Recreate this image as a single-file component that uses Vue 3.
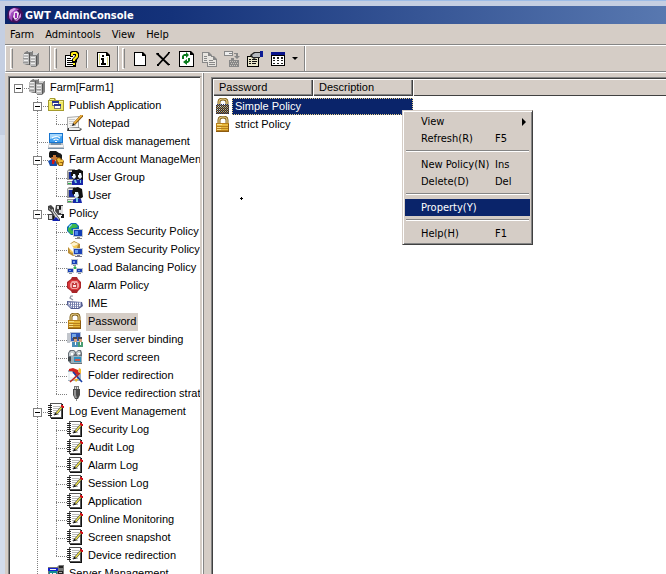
<script setup>
import { h } from 'vue'

// Each icon is a list of [fill, path, stroke, strokeWidth] layers on a 16x16 grid.
const note = [
  ['#555', 'M2 0h12v15H2z'],
  ['#fff', 'M3 1h10v13H3z'],
  ['#111', 'M14 1h1v15H3v-1h11z'],
  ['none', 'M0 2.500h4M0 4.500h4M0 6.500h4M0 8.500h4M0 10.500h4M0 12.500h4', '#222', 1],
  ['none', 'M5 3.500h7M5 5.500h6M5 7.500h4M5 9.500h3M5 11.500h6', '#bbb', 1],
  ['none', 'M14 4L8 11', '#333', 2.6],
  ['none', 'M13.500 4.500L8.500 10.500', '#f4e84e', 1.3],
  ['#111', 'M7 9.500l2 2-3 1z'],
  ['#d01018', 'M13 2h2v1h1v2h-2V4h-1z']
]
const padlock = [
  ['none', 'M4 7V4q0-3 4-3t4 3v4', '#80601c', 3],
  ['none', 'M4 7V4q0-3 4-3t4 3v4', '#e6cd85', 1.2],
  ['#b87f1a', 'M1 7h13v9H1z'],
  ['#e8b93c', 'M2 8h11v2H2zM2 11h11v1H2zM2 13h11v1H2z'],
  ['#f8e08a', 'M2 8h5v1H2zM2 11h4v1H2zM2 13h4v1H2z'],
  ['#8d5c10', 'M1 15h13v1H1zM13 8h1v8h-1z']
]
const icons = {
  app: [
    ['#43105a', 'M8 0l5 1 3 5-1 6-5 4-6-1-4-4 1-7 4-3z'],
    ['#a34ac0', 'M4 2l4-1 4 1-6 5-1 7-3-3V5z'],
    ['#d9a5e6', 'M3 3l4-2 2 1-5 4-1 4-1-3z'],
    ['#f2dff6', 'M7 5l3-1 2 2-1 5-3 2-2-3z'],
    ['#9a2bb8', 'M8 6h2v5H8z'],
    ['#c887dc', 'M12 9l2-3v4l-4 4-3-1 4-1z']
  ],
  farm: [
    ['#808080', 'M1 2l3-2h6v14H4l-3-1zM8 4l2-2h6v11l-3 3H8z'],
    ['#bcbcbc', 'M0 3h6v10H0zM7 5h6v10H7z'],
    ['#eee', 'M1 3h4v1H1zM1 6h4v1H1zM1 9h4v1H1zM8 6h4v1H8zM8 9h4v1H8zM8 12h4v1H8z'],
    ['#555', 'M6 2h1v12H6zM13 5h1v10h-1z'],
    ['#d0d0d0', 'M5 0h4v1H5zM10 2h5v1h-5zM10 3h4v1h-4z'],
    ['#999', 'M0 7h5v1H0zM0 11h5v1H0zM7 10h5v1H7z']
  ],
  publish: [
    ['#a59b2d', 'M0 3h1l1-2h5l1 2h8v11H0z'],
    ['#f1ea66', 'M1 4h14v9H1z'],
    ['#fbf7a0', 'M2 2h4v1H2zM1 4h14v1H1z'],
    ['#777', 'M4 4h7v5H4zM6 7h7v5H6z'],
    ['#fff', 'M5 6h5v2H5zM7 9h5v2H7z'],
    ['#28348f', 'M4 4h7v2H4zM6 7h7v2H6z']
  ],
  notepad: [
    ['#aaa', 'M0 2l12-1v13l-12 1z'],
    ['#f6f6f4', 'M1 3l10-1v11l-10 1z'],
    ['none', 'M2 4.500h6M2 6.500h5M2 8.500h4M3 10.500h6', '#ccc', 1],
    ['#333', 'M1 13l10-1 4 2-2 2H0z'],
    ['#eee', 'M2 13l9-.5 3 1.500-2 1H2z'],
    ['none', 'M15.500 0L7 9', '#8e5d10', 2.800],
    ['none', 'M15 0L7 8.500', '#f3b33e', 1.400],
    ['#111', 'M6 8l2 2-3 1z']
  ],
  disk: [
    ['#1674cf', 'M1 0h14v10H1z'],
    ['#3fa0f2', 'M2 1h12v8H2z'],
    ['#a3d6fc', 'M2 1h12v2L2 6z'],
    ['none', 'M4 5q4-3 8 0M5.500 7q2.500-2 5 0M7 8.500h2', '#fff', 1.200],
    ['#b8bec5', 'M1 10h14l1 5H0z'],
    ['#f7f7f7', 'M1 12h14v2H1z'],
    ['#7a93a8', 'M3 10h10v2H3zM0 15h16v1H0z']
  ],
  account: [
    ['#151515', 'M2 0h6l3 2v6H4L1 6V2z'],
    ['#c77736', 'M4 4h4v2h2v2L7 10 3 8z'],
    ['#111', 'M3 2h6v2H5v2H3z'],
    ['#174caa', 'M0 10l4-2 5 3v4H2z'],
    ['#d01918', 'M4 9h3l-1 4H4z'],
    ['#1b1b1b', 'M8 3l4-1 2 2v4h-3l-2-2z'],
    ['#96600e', 'M8 8l3-2 3 2 2 2-1 5h-4l-3-3z'],
    ['#f2c03c', 'M9 8l2-1 2 2-1 3-2-1zM12 9h3v2h-3zM11 12h3v2h-3z']
  ],
  group: [
    ['#999', 'M0 2l2-2h6v11H0zM0 12h7v4H0z'],
    ['#e4e4e4', 'M1 2h6v1H1zM1 13h5v1H1z'],
    ['#142a96', 'M2 3h6v7H2z'],
    ['#101010', 'M5 1h5l2-1 4 2v9l-2 1-3-2-3 2-3-3z'],
    ['#eef7ff', 'M5 5h3l1 3-2 2-2-2zM11 4h3l1 4-2 2-2-2z'],
    ['#111', 'M4 3h5v2H6v2H4zM10 2h5v2h-3v2h-2z'],
    ['#1828aa', 'M5 12l3-2 3 1 3-1 2 1v5H5z'],
    ['#7cc9dd', 'M7 11h2l1 3H8zM13 11h1v3h-1z'],
    ['#24b747', 'M1 14h3v1H1z']
  ],
  user: [
    ['#999', 'M0 2l2-2h6v11H0zM0 12h8v4H0z'],
    ['#e4e4e4', 'M1 2h6v1H1zM1 13h6v1H1z'],
    ['#18299d', 'M2 3h6v7H2z'],
    ['#111', 'M6 1l5-1 4 2 1 8-3 2-5-2-3-4z'],
    ['#e4f2f8', 'M7 5h4l1 4-2 2-3-2z'],
    ['#111', 'M6 2h6v3H8v2H6z'],
    ['#1628aa', 'M6 13l3-2 5 1 1 4H6z'],
    ['#7cc9dd', 'M9 11h2v4H9z'],
    ['#29bd43', 'M1 14h3v1H1z']
  ],
  policy: [
    ['#444', 'M0 1l3-1 3 3v3l6 8v2H8L3 7 0 5z'],
    ['#d8d8d8', 'M1 3l2 2 2-1v2l6 8v1H9L4 6 1 4z'],
    ['#444', 'M8 0h7v10h-5l-3-4zM0 9h5l2 3-1 3H0z'],
    ['#ddd', 'M9 1h2v3H9zM13 1h2v8h-2zM11 5h2v3h-2zM1 10h3v4H1z'],
    ['#181818', 'M11 1h2v3h-2zM14 9h2v4h-3v-2h1zM5 11h1v4H5z'],
    ['#1020b0', 'M4 16l4-4 4 4z']
  ],
  access: [
    ['#0969b7', 'M4 0h5l3 3v5l-4 4H4L0 8V4z'],
    ['#3bb94c', 'M5 1h4l2 3-3 1-3 0-1 2 3 1v3H4L1 8V5z'],
    ['#9bdfff', 'M2 3l3-2v1L2 5z'],
    ['#bfc8ce', 'M6 6h10v8H6z'],
    ['#123eb5', 'M7 7h8v6H7z'],
    ['#4e86ec', 'M8 8h3v4H8z'],
    ['#888', 'M10 14h3v1h2v1H8v-1h2z']
  ],
  system: [
    ['#b98c35', 'M1 4l6-4 6 3v10l-7 2-5-3z'],
    ['#f4ca59', 'M2 5l5-3 4 2-3 9-5-2z'],
    ['#fff4ce', 'M2 4l5-3 5 2-5 2z'],
    ['#fff', 'M1 3l2-1 6 8-2 2-6-6z'],
    ['#c3cad3', 'M6 7h10v7H6z'],
    ['#1c42b7', 'M7 8h8v5H7z'],
    ['#6ea1ef', 'M8 9h3v3H8z'],
    ['#778', 'M10 14h3v1h2v1H8v-1h2z']
  ],
  balance: [
    ['none', 'M8 7v3M8 8l-4 4M8 8l4 4', '#36b454', 1.200],
    ['#bdc5cf', 'M4 0h7v6H4zM0 9h7v5H0zM9 9h7v5H9z'],
    ['#193eb4', 'M5 1h5v4H5zM1 10h5v3H1zM10 10h5v3h-5z'],
    ['#739bea', 'M6 2h2v2H6zM2 11h2v1H2zM11 11h2v1h-2z'],
    ['#8b929c', 'M6 6h3v1H6zM2 14h3v1H2zM11 14h3v1h-3z']
  ],
  alarm: [
    ['#a92529', 'M4 2l1-2h5l1 2 3 3v6l-3 3-1 2H5l-1-2-4-3V5z'],
    ['#d9373b', 'M4 3h7l2 3v4l-2 3H4l-3-3V6z'],
    ['#f0a09e', 'M5 4h5l2 3v3l-2 2H5l-2-2V7z'],
    ['#c2383c', 'M5 6h5v5H5z'],
    ['#fbe4e2', 'M7 6h1v1H7zM6 8h3v2H6z']
  ],
  ime: [
    ['none', 'M6 5L3 3l1-2h2', '#8a8d9c', 1.200],
    ['#555e91', 'M0 6l15 1 1 4-4 3H4L0 10z'],
    ['#a8afd2', 'M1 7h13v4l-3 2H4l-3-3z'],
    ['none', 'M2 8.500h11M3 10.500h10M5 12.500h6', '#fff', 1],
    ['none', 'M3.500 7v4M5.500 7v6M7.500 7v6M9.500 7v6M11.500 7v5', '#747da7', 1]
  ],
  lock: padlock,
  binding: [
    ['#c2c6cc', 'M0 2h3v10H0z'],
    ['#b9c4d6', 'M3 1h11v10H3z'],
    ['#2f58b8', 'M4 2h9v8H4z'],
    ['#75a9e9', 'M5 3h4v4H5z'],
    ['#51474a', 'M6 6h4v3H6zM11 6h4v3h-4z'],
    ['#d6a27d', 'M7 8h3v3H7zM12 8h3v3h-3z'],
    ['#4c8fb8', 'M5 11h6v5H5z'],
    ['#4a9d72', 'M11 11h5v5h-5z'],
    ['#fff', 'M8 11h1v3H8zM13 11h1v3h-1z']
  ],
  record: [
    ['#687078', 'M1 4l2-3h4l2 2 2-2h3l1 3v11H4l-3-3z'],
    ['#c7ced0', 'M2 4l2-2h3l1 2-2 3H2zM9 4l2-2h2l1 3-3 2z'],
    ['#9db0bb', 'M4 7h11v7H4z'],
    ['#2e91c1', 'M7 8h7v5H7z'],
    ['#cf5b50', 'M8 10h5v2H8z'],
    ['#fff', 'M4 4h2v2H4zM11 4h2v1h-2z'],
    ['#42494c', 'M1 8h3v4H1z']
  ],
  folder: [
    ['#9fb2bf', 'M1 3h8l5 4v7H1z'],
    ['#edf2f4', 'M1 5h9v8H1z'],
    ['#cf2520', 'M2 2l4-1 5 2 1 4-3 1-4-4H2z'],
    ['#f2bf30', 'M12 1l2 1v5l-3-3z'],
    ['none', 'M6 5l9 10', '#173ea6', 1.600],
    ['none', 'M13 6L3 15', '#be2620', 1.600],
    ['#e6b62c', 'M7 12h5l-3 3z'],
    ['#fff', 'M3 7h4v3H3z']
  ],
  device: [
    ['#777', 'M7 1h5v5H7z'],
    ['#ddd', 'M8 2h1v3H8zM10 2h1v3h-1z'],
    ['#4a4a4a', 'M6 4h7v6l-2 4H8l-2-4z'],
    ['#959595', 'M7 5h2v5l1 3H8l-1-3z'],
    ['#888', 'M9 14h1v2H9z']
  ],
  note,
  server: [
    ['#777', 'M0 2h9l2-2h5v13l-2 3H0z'],
    ['#168c91', 'M1 5h8v10H1z'],
    ['#1420cf', 'M0 3h10v3H0z'],
    ['#f3f3f3', 'M2 4h6v1H2zM2 8h2v2H2zM5 8h3v1H5z'],
    ['#222', 'M11 1h4v2h-4zM10 6h5v8h-5z'],
    ['#aaa', 'M11 7h3v1h-3zM11 10h3v1h-3z']
  ],
  help: [
    ['#000', 'M1 4h8v1h3v11H1z'],
    ['#fff', 'M2 5h9v10H2z'],
    ['none', 'M3 7.500h4M3 9.500h5M3 11.500h5M3 13.500h6', '#000', 1],
    ['#000', 'M6 1l2-1h5l2 2v4l-2 3v2l-1 1v3H9v-3h-1V8l3-3V4H9v2H6z'],
    ['#ffee16', 'M7 2l2-1h3l2 2v3l-3 3v1H9V8l3-3V3H9v2H7zM9 12h2v2H9z']
  ],
  info: [
    ['#000', 'M2 1h10l3 3v12H2z'],
    ['#fff', 'M3 2h8v3h3v10H3z'],
    ['#dcdc84', 'M4 3h1v11H4zM12 6h1v8h-1z'],
    ['#000', 'M11 2h1v2h2v1h-3zM7 4h2v2H7zM6 7h3v5h2v2H6v-2h1V9H6z']
  ],
  page: [
    ['#000', 'M2 1h9l3 3v11H2z'],
    ['#fff', 'M3 2h7v3h3v9H3z'],
    ['#000', 'M10 2h1v2h2v1h-3z']
  ],
  cross: [
    ['none', 'M2 2.500l12 11.500M14 2L3 14', '#000', 1.800],
    ['#000', 'M1 2h3v2H2zM13 1h2v1h-2zM2 13h2v2H2zM13 13h2v1h-2z']
  ],
  refresh: [
    ['#000', 'M1 0h12l3 3v13H1z'],
    ['#fff', 'M2 1h10v3h3v11H2z'],
    ['#000', 'M12 1h1v2h2v1h-3z'],
    ['#087b1b', 'M4 5l2-2h2V1l3 3-3 3V5H6v3H4zM12 7v3l-2 2H9v2l-4-3 4-3v2h1V7z']
  ],
  copy: [
    ['#888', 'M1 1h7l3 3v8H1zM6 5h7l3 3v8H6z'],
    ['#e8e5e0', 'M2 2h5v3h3v6H2zM7 6h5v3h3v6H7z'],
    ['none', 'M3 5.500h3M3 7.500h3M3 9.500h3M8 9.500h4M8 11.500h6M8 13.500h6', '#888', 1]
  ],
  paste: [
    ['#888', 'M0 0h9v5H0z'],
    ['#eee', 'M1 1h7v3H1z'],
    ['#888', 'M5 2h3v1H5zM10 2h4v3h2l-3 3-3-3h2V3h-2z'],
    ['#888', 'M5 9h2V7h3v2h5v7H5z'],
    ['#c9c4bd', 'M6 10h1v1H6zM8 10h1v1H8zM10 10h1v1h-1zM12 10h1v1h-1zM7 12h1v1H7zM9 12h1v1H9zM11 12h1v1h-1zM13 12h1v1h-1zM6 14h1v1H6zM8 14h1v1H8zM10 14h1v1h-1zM12 14h1v1h-1z']
  ],
  props: [
    ['#000', 'M0 5h12v11H0z'],
    ['#e8e5c9', 'M1 6h10v9H1z'],
    ['none', 'M2 8.500h2M5 8.500h5M2 10.500h2M5 10.500h5M2 12.500h2M5 12.500h4', '#111', 1],
    ['#222', 'M3 4l4-3h6v6H9L7 8 4 6z'],
    ['#b6bac0', 'M5 4l3-2h5v4H8L6 6z'],
    ['#0c1b94', 'M13 0h3v6h-3z']
  ],
  list: [
    ['#000', 'M1 1h14v14H1z'],
    ['#fff', 'M2 5h12v9H2z'],
    ['#08128b', 'M1 1h14v3H1z'],
    ['#222', 'M3 6h2v2H3zM7 6h2v2H7zM11 6h2v2h-2zM3 9h2v1H3zM7 9h2v1H7zM11 9h2v1h-2zM3 12h2v1H3zM7 12h2v1H7zM11 12h2v1h-2z']
  ]
}

const Icon = (props) =>
  h('svg', { viewBox: '0 0 16 16', width: 16, height: 16, 'aria-hidden': 'true' },
    icons[props.name].map(([fill, d, stroke, width]) =>
      h('path', { fill, d, stroke, 'stroke-width': width })))
Icon.props = ['name']

const menus = ['Farm', 'Admintools', 'View', 'Help']

const n = (label, icon, children) => ({ label, icon, children })
const farm = n('Farm[Farm1]', 'farm', [
  n('Publish Application', 'publish', [n('Notepad', 'notepad')]),
  n('Virtual disk management', 'disk'),
  n('Farm Account ManageMent', 'account', [n('User Group', 'group'), n('User', 'user')]),
  n('Policy', 'policy', [
    n('Access Security Policy', 'access'),
    n('System Security Policy', 'system'),
    n('Load Balancing Policy', 'balance'),
    n('Alarm Policy', 'alarm'),
    n('IME', 'ime'),
    n('Password', 'lock'),
    n('User server binding', 'binding'),
    n('Record screen', 'record'),
    n('Folder redirection', 'folder'),
    n('Device redirection strategy', 'device')
  ]),
  n('Log Event Management', 'note', [
    n('Security Log', 'note'),
    n('Audit Log', 'note'),
    n('Alarm Log', 'note'),
    n('Session Log', 'note'),
    n('Application', 'note'),
    n('Online Monitoring', 'note'),
    n('Screen snapshot', 'note'),
    n('Device redirection', 'note')
  ]),
  n('Server Management', 'server')
])

// Flatten the tree; each row carries the guide cells drawn before its icon.
const rows = []
const walk = (node, guides, last) => {
  const own = !guides ? 'root' : last ? 'end' : 'mid'
  rows.push({ ...node, cells: [...(guides || []), own], open: !!node.children })
  const next = guides ? [...guides, last ? 'none' : 'line'] : ['none']
  node.children?.forEach((c, i) => walk(c, next, i === node.children.length - 1 && c.icon !== 'server'))
}
walk(farm, null, true)

const context = [
  [{ label: 'View', sub: true }, { label: 'Refresh(R)', key: 'F5' }],
  [{ label: 'New Policy(N)', key: 'Ins' }, { label: 'Delete(D)', key: 'Del' }],
  [{ label: 'Property(Y)', active: true }],
  [{ label: 'Help(H)', key: 'F1' }]
]
</script>

<template>
  <div class="desktop">
    <div class="window">
      <header class="title"><Icon name="app" /><span>GWT AdminConsole</span></header>
      <nav class="menubar">
        <button v-for="m in menus" :key="m" type="button">{{ m }}</button>
      </nav>
      <div class="toolbar">
        <div class="band">
          <i class="grip"></i>
          <button type="button" class="tool wide" aria-label="Farm"><Icon name="farm" /></button>
        </div>
        <div class="band">
          <i class="grip"></i>
          <button type="button" class="tool" aria-label="Help"><Icon name="help" /></button>
          <i class="sep"></i>
          <button type="button" class="tool" aria-label="About"><Icon name="info" /></button>
        </div>
        <div class="band">
          <i class="grip"></i>
          <button v-for="t in ['page', 'cross', 'refresh', 'copy', 'paste', 'props', 'list']" :key="t"
            type="button" class="tool" :aria-label="t"><Icon :name="t" /></button>
          <button type="button" class="drop" aria-label="View options"><i class="down"></i></button>
        </div>
      </div>
      <main class="panes">
        <ul class="tree">
          <li v-for="(r, i) in rows" :key="i" class="row">
            <i v-for="(c, j) in r.cells" :key="j" class="cell" :class="c">
              <button v-if="r.open && j === r.cells.length - 1" type="button" class="toggle" aria-label="Collapse"></button>
            </i>
            <Icon :name="r.icon" />
            <span class="label" :class="{ picked: r.label === 'Password' }">{{ r.label }}</span>
          </li>
        </ul>
        <div class="splitter"></div>
        <section class="list">
          <table>
            <colgroup><col class="c1"><col class="c1"><col></colgroup>
            <thead>
              <tr><th>Password</th><th>Description</th><th></th></tr>
            </thead>
            <tbody>
              <tr>
                <td colspan="2">
                  <div class="entry first"><span class="shade"><Icon name="lock" /></span><span class="name chosen">Simple Policy</span></div>
                </td>
                <td></td>
              </tr>
              <tr>
                <td colspan="2">
                  <div class="entry"><Icon name="lock" /><span class="name">strict Policy</span></div>
                </td>
                <td></td>
              </tr>
            </tbody>
          </table>
          <svg class="mark" viewBox="0 0 3 3" width="3" height="3"><path d="M1 0h1v1h1v1H2v1H1V2H0V1h1z" /></svg>
          <div class="context">
            <div v-for="(g, i) in context" :key="i" class="section">
              <button v-for="it in g" :key="it.label" type="button" :class="{ active: it.active }">
                <span>{{ it.label }}</span><span>{{ it.key }}</span><i v-if="it.sub" class="more"></i>
              </button>
            </div>
          </div>
        </section>
      </main>
    </div>
  </div>
</template>

<style>
body { margin: 0; overflow: hidden; }
</style>

<style scoped>
* { box-sizing: border-box; }
button { margin: 0; padding: 0; border: 0; background: none; color: inherit; font: inherit; }
svg { display: block; flex: none; }
.desktop {
  height: 100vh;
  padding: 6px 0 0 5px;
  overflow: hidden;
  background: linear-gradient(#9dbce6 0 1px, #c5cfe2 1px 135px, #d3dcec 135px);
  font-family: "DejaVu Sans Condensed", "DejaVu Sans", sans-serif;
  font-size: 11px;
  color: #000;
}
.window { display: flex; flex-direction: column; height: 100%; background: #d5cdc6; }
.title {
  display: flex; align-items: center; gap: 2px; flex: none;
  height: 18px; padding-left: 2px;
  background: linear-gradient(90deg, #0a246a 0, #14327a 25%, #5878b0 100%);
  color: #fff; font-weight: bold;
}
.menubar { display: flex; flex: none; gap: 11px; height: 21px; padding: 0 5px; border-bottom: 1px solid #858585; }
.toolbar { display: flex; flex: none; height: 27px; border: solid; border-width: 1px 0 1px 1px; border-color: #fff #fff #858585; }
.band { display: flex; align-items: center; padding: 0 3px 0 4px; border-right: 1px solid #858585; box-shadow: 1px 0 #fff; }
.grip { width: 3px; height: 21px; margin-right: 3px; border: 1px solid #fff; border-right-color: #858585; }
.sep { width: 2px; height: 18px; margin: 0 3px; background: linear-gradient(90deg, #858585 50%, #fff 50%); }
.tool { display: flex; align-items: center; justify-content: center; width: 23px; height: 23px; }
.tool.wide { width: 30px; }
.drop { width: 12px; }
.down { display: block; width: 0; margin: 0 3px; border: 3px solid transparent; border-top-color: #000; border-bottom: 0; }
.panes { display: flex; flex: 1; min-height: 0; padding-left: 3px; border-top: 1px solid #fff; font-family: "Liberation Sans", Arial, sans-serif; }
.tree {
  flex: none; width: 194px; margin: 3px 0 0; padding: 2px 0 0 1px; overflow: hidden; list-style: none;
  background: #fff; border: 1px solid #858585; border-right: 2px solid #d5cdc6; border-bottom: 0;
  box-shadow: inset 1px 1px #404040, 1px 0 #fff;
}
.row { display: flex; height: 18px; white-space: nowrap; }
.cell { flex: none; width: 19px; height: 18px; }
.line, .mid { background: repeating-linear-gradient(#808080 0 1px, transparent 1px 2px) 8px 0 / 1px 18px no-repeat; }
.mid, .end, .root { background-image: repeating-linear-gradient(#808080 0 1px, transparent 1px 2px), repeating-linear-gradient(90deg, #808080 0 1px, transparent 1px 2px); background-repeat: no-repeat; background-position: 8px 0, 8px 9px; }
.mid { background-size: 1px 18px, 11px 1px; }
.end { background-size: 1px 9px, 11px 1px; }
.root { background-size: 0 0, 11px 1px; }
.toggle { display: block; width: 9px; height: 9px; margin: 5px 0 0 4px; border: 1px solid #808080; background: linear-gradient(#000, #000) 1px 3px / 5px 1px no-repeat #fff; }
.label { display: block; height: 18px; margin-left: 3px; padding: 0 2px; line-height: 17px; }
.picked { background: #d5cdc6; }
.splitter { flex: none; width: 9px; border-left: 1px solid #fff; box-shadow: inset 1px 0 #858585; }
.list { position: relative; flex: 1; min-width: 0; margin-top: 4px; overflow: hidden; background: #fff; border: solid #858585; border-width: 1px 0 0 1px; box-shadow: inset 1px 1px #404040; padding: 1px 0 0 1px; }
table { width: 100%; border-collapse: collapse; table-layout: fixed; }
.c1 { width: 100px; }
th { height: 17px; padding: 0 0 0 6px; text-align: left; font-weight: normal; line-height: 15px; background: #d5cdc6; box-shadow: inset 1px 1px #fff, inset -1px -1px #404040, inset -2px -2px #858585; }
th:last-child { box-shadow: inset 1px 1px #fff, inset 0 -1px #404040; }
td { padding: 0; }
.entry { display: flex; align-items: center; height: 18px; padding-left: 2px; gap: 1px; }
.first { margin-top: 1px; }
.name { flex: 1; height: 17px; padding-left: 2px; border: 1px solid transparent; line-height: 15px; }
.chosen { color: #fff; background: #0a246a; border: 1px dotted #e8d18b; }
.shade { position: relative; }
.shade::after { content: ""; position: absolute; inset: 6px 2px 0 1px; background: repeating-conic-gradient(#0a246a 0 25%, transparent 0 50%) 0 0 / 2px 2px; }
.mark { position: absolute; left: 28px; top: 119px; }
.context {
  position: absolute; left: 190px; top: 32px; width: 131px; padding: 2px;
  background: #d5cdc6; border: 1px solid; border-color: #d5cdc6 #404040 #404040 #d5cdc6;
  box-shadow: inset 1px 1px #fff, inset -1px -1px #858585;
  font-family: "DejaVu Sans Condensed", "DejaVu Sans", sans-serif;
}
.section + .section { padding-top: 9px; background: linear-gradient(#858585 50%, #fff 50%) 1px 3px / 123px 2px no-repeat; }
.context button { display: grid; grid-template-columns: 74px 1fr 8px; align-items: center; width: 100%; height: 17px; padding-left: 16px; text-align: left; }
.active { color: #fff; background: #0a246a; }
.more { width: 0; height: 0; border: 4px solid transparent; border-left-color: #000; border-right: 0; }
</style>
